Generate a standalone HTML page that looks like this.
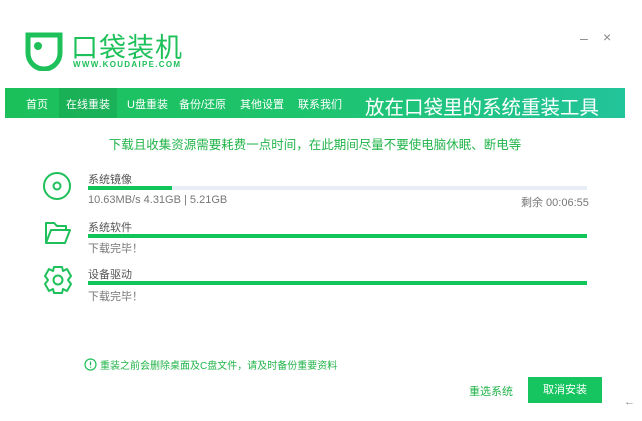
<!DOCTYPE html>
<html><head><meta charset="utf-8"><style>
body{margin:0;width:642px;height:421px;background:#fff;position:relative;overflow:hidden;font-family:"Liberation Sans","Noto Sans CJK SC",sans-serif;}
.a{position:absolute;white-space:nowrap}
.nav{position:absolute;left:5px;top:88px;width:620px;height:30px;background:linear-gradient(90deg,#1cc05a,#1ec46e 50%,#22c49a);}
.nav span{position:absolute;top:8px;font-size:11px;color:#fff}
.bar{position:absolute;left:88px;width:499px;height:4px;background:#10c55a}
.lbl{font-size:11px;color:#555}
.sub{font-size:11px;color:#777}
</style></head><body>
<svg class="a" style="left:24px;top:31px" width="40" height="40" viewBox="0 0 40 40">
<path d="M4 4 H36 V22 A16 16 0 0 1 4 22 Z" fill="none" stroke="#1ec05a" stroke-width="5"/>
<circle cx="14" cy="15" r="4" fill="#1ec05a"/></svg>
<div class="a" style="left:71px;top:26px;font-size:27px;color:#1ec05a;letter-spacing:1px">口袋装机</div>
<div class="a" style="left:73px;top:60px;font-size:8px;color:#1ec05a;letter-spacing:1.3px;font-weight:bold">WWW.KOUDAIPE.COM</div>
<div class="a" style="left:580px;top:30px;font-size:14px;color:#888">–</div>
<div class="a" style="left:603px;top:29px;font-size:14px;color:#888">×</div>
<div class="nav">
<div style="position:absolute;left:54px;top:0;width:58px;height:30px;background:rgba(0,0,0,0.08)"></div>
<span style="left:21px">首页</span><span style="left:61px">在线重装</span><span style="left:122px">U盘重装</span><span style="left:174px">备份/还原</span><span style="left:235px">其他设置</span><span style="left:293px">联系我们</span>
<span style="left:360px;top:3px;font-size:19.5px">放在口袋里的系统重装工具</span>
</div>
<div class="a" style="left:0;width:630px;text-align:center;top:134px;font-size:12.5px;color:#22b44a">下载且收集资源需要耗费一点时间，在此期间尽量不要使电脑休眠、断电等</div>
<svg class="a" style="left:42px;top:171px" width="30" height="30" viewBox="0 0 30 30"><circle cx="15" cy="15" r="13" fill="none" stroke="#1ec05a" stroke-width="2"/><circle cx="15" cy="15" r="3.5" fill="none" stroke="#1ec05a" stroke-width="2"/></svg>
<svg class="a" style="left:44px;top:221px" width="28" height="24" viewBox="0 0 28 24"><path d="M2 22 V2 H10 L13 5 H22 V9 M2 22 L7 9 H26 L21 22 Z" fill="none" stroke="#1ec05a" stroke-width="2" stroke-linejoin="round"/></svg>
<svg class="a" style="left:43px;top:265px" width="30" height="30" viewBox="0 0 30 30"><path d="M11 2 H19 L20 6 L24 4 L28 11 L25 15 L28 19 L24 26 L20 24 L19 28 H11 L10 24 L6 26 L2 19 L5 15 L2 11 L6 4 L10 6 Z" fill="none" stroke="#1ec05a" stroke-width="2" stroke-linejoin="round"/><circle cx="15" cy="15" r="4.5" fill="none" stroke="#1ec05a" stroke-width="2"/></svg>
<div class="a lbl" style="left:88px;top:171px">系统镜像</div>
<div class="bar" style="top:186px;background:#e8eef8"></div><div class="bar" style="top:186px;width:84px"></div>
<div class="a sub" style="left:88px;top:194px;font-size:11px">10.63MB/s 4.31GB | 5.21GB</div>
<div class="a sub" style="left:521px;top:194px">剩余 00:06:55</div>
<div class="a lbl" style="left:88px;top:219px">系统软件</div>
<div class="bar" style="top:234px"></div>
<div class="a sub" style="left:88px;top:240px">下载完毕！</div>
<div class="a lbl" style="left:88px;top:266px">设备驱动</div>
<div class="bar" style="top:281px"></div>
<div class="a sub" style="left:88px;top:288px">下载完毕！</div>
<svg class="a" style="left:84px;top:358px" width="13" height="13" viewBox="0 0 13 13"><circle cx="6.5" cy="6.5" r="5.5" fill="none" stroke="#1ec05a" stroke-width="1.2"/><path d="M6.5 3.5V7.5M6.5 8.8V9.8" stroke="#1ec05a" stroke-width="1.3"/></svg>
<div class="a" style="left:100px;top:357px;font-size:10px;color:#22b44a">重装之前会删除桌面及C盘文件，请及时备份重要资料</div>
<div class="a" style="left:469px;top:383px;font-size:11px;color:#22b44a">重选系统</div>
<div class="a" style="left:528px;top:377px;width:74px;height:26px;background:#16c460;color:#fff;font-size:11px;text-align:center;line-height:26px">取消安装</div>
<div class="a" style="left:624px;top:396px;font-size:11px;color:#888">←</div>
</body></html>
